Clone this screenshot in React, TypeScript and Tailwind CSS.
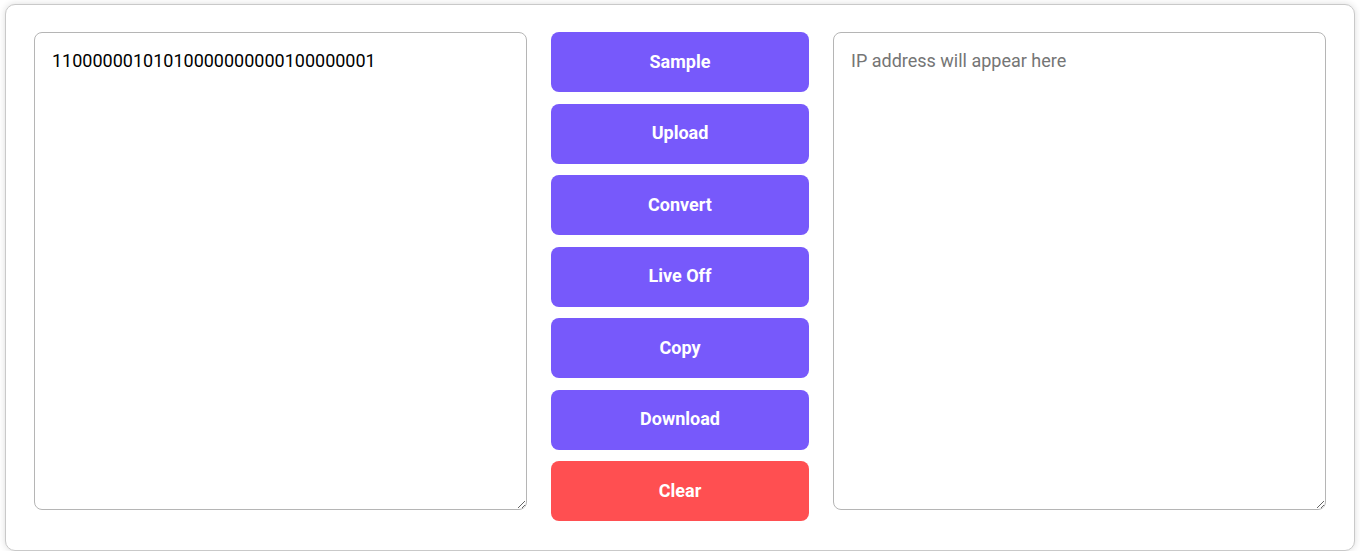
import React, { useState } from "react";

const buttons = [
  { label: "Sample", color: "bg-[#7759fb]" },
  { label: "Upload", color: "bg-[#7759fb]" },
  { label: "Convert", color: "bg-[#7759fb]" },
  { label: "Live Off", color: "bg-[#7759fb]" },
  { label: "Copy", color: "bg-[#7759fb]" },
  { label: "Download", color: "bg-[#7759fb]" },
  { label: "Clear", color: "bg-[#ff4f51]" },
];

const App: React.FC = () => {
  const [input, setInput] = useState("11000000101010000000000100000001");
  const [output, setOutput] = useState("");

  return (
    <div className="px-[5px] pt-[4px] bg-white font-['Roboto',sans-serif]">
      <div className="flex items-start gap-6 rounded-[10px] border border-[#c9c9c9] bg-white pl-[28px] pr-[28px] pt-[27px] pb-[29px] shadow-[0_0_7px_rgba(0,0,0,0.14)]">
        <textarea
          value={input}
          onChange={(e) => setInput(e.target.value)}
          className="h-[478px] flex-1 rounded-[8px] border border-[#b5b5b5] px-[17px] py-[16px] text-[18px] leading-[23px] text-black outline-none"
        />
        <div className="flex w-[258px] flex-col gap-[11.5px]">
          {buttons.map((b) => (
            <button
              key={b.label}
              className={`h-[60px] rounded-[8px] pb-[2px] ${b.color} text-[18px] font-bold text-white`}
            >
              {b.label}
            </button>
          ))}
        </div>
        <textarea
          value={output}
          onChange={(e) => setOutput(e.target.value)}
          placeholder="IP address will appear here"
          className="h-[478px] flex-1 rounded-[8px] border border-[#b5b5b5] px-[17px] py-[16px] text-[18px] leading-[23px] text-black placeholder:text-[#757575] outline-none"
        />
      </div>
    </div>
  );
};

export default App;
